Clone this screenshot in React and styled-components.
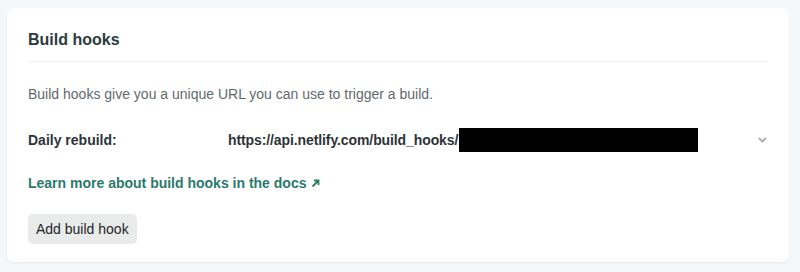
import React from 'react'
import styled, { createGlobalStyle } from 'styled-components'

const Global = createGlobalStyle`
  body {
    margin: 0;
    background: #f5f8f8;
    font-family: "Liberation Sans", Arial, sans-serif;
    -webkit-font-smoothing: antialiased;
  }
`;

const Page = styled.div`
  padding: 8px 11px 10px 7px;
`;

const Card = styled.section`
  background: #fff;
  border-radius: 6px;
  box-shadow: 0 1px 2px rgba(40, 60, 70, 0.08);
  padding: 0 21px 18px 21px;
  height: 254px;
  box-sizing: border-box;
`;

const Title = styled.h2`
  margin: 0;
  padding: 23px 0 12px;
  font-size: 16px;
  line-height: 18px;
  font-weight: 700;
  color: #2d3b41;
  border-bottom: 1px solid #eef1f2;
`;

const Text = styled.p`
  margin: 24px 0 0;
  font-size: 14px;
  line-height: 16px;
  color: #5f6a6e;
`;

const HookRow = styled.div`
  display: grid;
  grid-template-columns: 200px 1fr 24px;
  align-items: center;
  margin-top: 26px;
  height: 24px;
  font-size: 14px;
  font-weight: 700;
  color: #2d3438;
`;

const Url = styled.div`
  display: flex;
  align-items: center;
  letter-spacing: -0.1px;
`;

const Redact = styled.span`
  display: inline-block;
  width: 239px;
  height: 24px;
  background: #000;
  margin-left: 1px;
`;

const Chevron = styled.svg`
  width: 9px;
  height: 6px;
  justify-self: end;
  margin-right: 1px;
`;

const DocsLink = styled.a`
  display: inline-flex;
  align-items: center;
  margin-top: 23px;
  font-size: 14px;
  line-height: 16px;
  font-weight: 700;
  color: #2b7a6c;
  text-decoration: none;
`;

const Arrow = styled.svg`
  width: 9px;
  height: 9px;
  margin-left: 5px;
`;

const Button = styled.button`
  display: block;
  margin-top: 22px;
  padding: 0 8px;
  height: 30px;
  border: none;
  border-radius: 5px;
  background: #e9ebeb;
  font-family: inherit;
  font-size: 14px;
  color: #1f2528;
`;

export default function App() {
  return (
    <Page>
      <Global />
      <Card>
        <Title>Build hooks</Title>
        <Text>Build hooks give you a unique URL you can use to trigger a build.</Text>
        <HookRow>
          <span>Daily rebuild:</span>
          <Url>
            https://api.netlify.com/build_hooks/
            <Redact />
          </Url>
          <Chevron viewBox="0 0 9 6">
            <path d="M1 1l3.5 3.5L8 1" fill="none" stroke="#9aa3a6" strokeWidth="1.6" />
          </Chevron>
        </HookRow>
        <DocsLink href="#">
          Learn more about build hooks in the docs
          <Arrow viewBox="0 0 9 9">
            <path d="M1.5 7.5L7 2M3 1.5h4.5V6" fill="none" stroke="#2b7a6c" strokeWidth="1.8" />
          </Arrow>
        </DocsLink>
        <Button>Add build hook</Button>
      </Card>
    </Page>
  )
}
